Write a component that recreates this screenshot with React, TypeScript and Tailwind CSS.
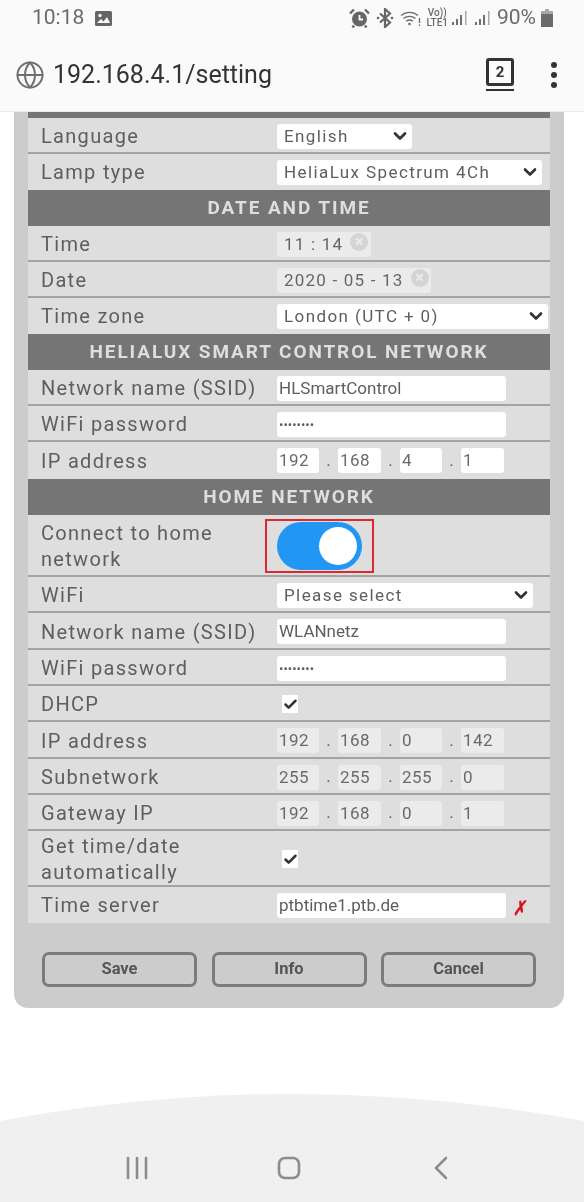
import React from 'react';
import { Check, ChevronDown, Globe } from 'lucide-react';

const Label = ({ children }: any) => (
  <div className="w-[236px] shrink-0 text-[20px] leading-[26px] tracking-[1.3px] text-[#5e5e5e]">{children}</div>
);

const Row = ({ label, children, h = 'h-[36px]' }: any) => (
  <div className={`flex items-center border-b-2 border-[#a3a3a3] pl-[13px] pt-[2px] ${h}`}>
    <Label>{label}</Label>
    <div className="flex min-w-0 flex-1 items-center">{children}</div>
  </div>
);

const LastRow = ({ label, children, h = 'h-[36px]' }: any) => (
  <div className={`flex items-center pl-[13px] ${h}`}>
    <Label>{label}</Label>
    {children}
  </div>
);

const Heading = ({ children }: any) => (
  <div className="flex h-[36px] items-center justify-center bg-[#757575] pt-[1px] text-[19px] font-bold tracking-[1.9px] text-[#dedede]">
    {children}
  </div>
);

const Select = ({ value, w }: any) => (
  <div className={`flex h-[25px] shrink-0 items-center justify-between rounded-[3px] bg-white pl-[7px] pr-[2px] text-[17px] tracking-[1.4px] text-[#5e5e5e] ${w}`}>
    <span className="pt-[1px]">{value}</span>
    <ChevronDown size={20} strokeWidth={3.2} className="text-[#333]" />
  </div>
);

const TextInput = ({ value, dots }: any) => (
  <div className={`flex h-[25px] w-[229px] shrink-0 items-center rounded-[3px] bg-white pl-[2px] pt-[1px] text-[#5e5e5e] ${dots ? 'text-[13px] tracking-[0px]' : 'text-[17px]'}`}>
    {value}
  </div>
);

const Chip = ({ value, w, white }: any) => (
  <div className={`flex h-[25px] items-center rounded-[3px] pl-[2px] pt-[1px] text-[17px] tracking-[0.5px] text-[#6a6a6a] ${white ? 'bg-white' : 'bg-[#ebebeb]'} ${w}`}>
    {value}
  </div>
);

const IpFields = ({ parts, white }: any) => (
  <div className="flex items-center text-[17px] text-[#5e5e5e]">
    <Chip value={parts[0]} w="w-[42px]" white={white} />
    <span className="w-[19px] text-center">.</span>
    <Chip value={parts[1]} w="w-[43px]" white={white} />
    <span className="w-[19px] text-center">.</span>
    <Chip value={parts[2]} w="w-[42px]" white={white} />
    <span className="w-[19px] text-center">.</span>
    <Chip value={parts[3]} w="w-[43px]" white={white} />
  </div>
);

const DateChip = ({ value, w }: any) => (
  <div className={`flex h-[25px] items-center whitespace-nowrap rounded-[3px] bg-[#ebebeb] pl-[7px] text-[17px] tracking-[1.2px] text-[#666] ${w}`}>
    <span className="pt-[1px]">{value}</span>
    <span className="mb-[5px] ml-[7px] flex h-[18px] w-[18px] items-center justify-center rounded-full bg-[#d4d4d4] text-[16px] font-bold leading-none tracking-normal text-[#ebebeb]">×</span>
  </div>
);

const Tick = () => (
  <div className="ml-[5px] flex h-[18px] w-[16px] items-center justify-center bg-white">
    <Check size={15} strokeWidth={4} className="text-[#333]" />
  </div>
);

const Btn = ({ children }: any) => (
  <div className="flex h-[35px] w-[155px] items-center justify-center rounded-[7px] border-[3px] border-[#7c7c7c] text-[16.5px] font-bold text-[#555]">
    {children}
  </div>
);

const SignalBars = () => (
  <svg width="17" height="17" viewBox="0 0 17 17" fill="#6e6e6e">
    <rect x="1" y="12" width="2" height="3" />
    <rect x="5" y="9" width="2" height="6" />
    <rect x="9" y="5" width="2" height="10" />
    <rect x="14" y="1" width="1.500" height="14" fill="#a8a8a8" />
  </svg>
);

const AlarmIcon = () => (
  <svg width="21" height="20" viewBox="0 0 21 20" className="mr-[6px]">
    <circle cx="10.500" cy="11" r="7.500" fill="#666" />
    <path d="M10.500 7v4.500h3.500" fill="none" stroke="#fafafa" strokeWidth="1.800" />
    <path d="M1 5.500L5 1.500M20 5.500L16 1.500M5 17.500L3.500 19.500M16 17.500L17.500 19.500" stroke="#666" strokeWidth="2.400" />
  </svg>
);

const BluetoothIcon = () => (
  <svg width="18" height="20" viewBox="0 0 18 20" fill="none" stroke="#666" strokeWidth="2.200" className="mr-[6px]">
    <path d="M4 5.500l10 9-5 4.500V1l5 4.500-10 9" />
    <circle cx="2" cy="10" r="1.300" fill="#666" stroke="none" />
    <circle cx="16" cy="10" r="1.300" fill="#666" stroke="none" />
  </svg>
);

const WifiIcon = () => (
  <svg width="21" height="18" viewBox="0 0 21 18" fill="none" stroke="#6b6b6b" strokeWidth="1.400" className="mr-[5px]">
    <path d="M1 6.500a13 13 0 0 1 17 0M3.500 9.500a9.500 9.500 0 0 1 12 0M6.200 12.300a5.500 5.500 0 0 1 6.600 0" />
    <circle cx="9.500" cy="15" r="1.300" fill="#6b6b6b" stroke="none" />
    <path d="M19.500 9v5M19.500 15.500v1.500" strokeWidth="1.300" />
  </svg>
);

const StatusBar = () => (
  <div className="flex h-[36px] items-center justify-between pl-[32px] pr-[31px] text-[#6b6b6b]">
    <div className="flex items-center gap-[11px]">
      <span className="text-[21px]">10:18</span>
      <svg width="17" height="15" viewBox="0 0 17 15">
        <rect x="0" y="0" width="17" height="15" rx="1.5" fill="#666" />
        <circle cx="5" cy="4.500" r="1.700" fill="#fafafa" />
        <path d="M2 12l4-4 2.500 2.500L12 6l3 6z" fill="#fafafa" />
      </svg>
    </div>
    <div className="flex items-center">
      <AlarmIcon />
      <BluetoothIcon />
      <WifiIcon />
      <div className="mr-[3px] flex flex-col items-center text-[10px] font-medium leading-[10px]">
        <span>Vo))</span>
        <span>LTE1</span>
      </div>
      <SignalBars />
      <span className="w-[6px]" />
      <SignalBars />
      <span className="ml-[6px] text-[21px]">90%</span>
      <svg width="12" height="18" viewBox="0 0 12 18" className="ml-[5px]" fill="#6b6b6b">
        <rect x="4" y="0" width="4" height="2" fill="#a8a8a8" />
        <rect x="0" y="2" width="12" height="3" fill="#a8a8a8" />
        <rect x="0" y="5" width="12" height="13" />
      </svg>
    </div>
  </div>
);

const UrlBar = () => (
  <div className="flex h-[76px] items-center justify-between border-b border-[#ececec] pt-[2px] pl-[15px] pr-[27px]">
    <div className="flex items-center gap-[8px]">
      <Globe size={30} strokeWidth={1.6} className="text-[#6f6f6f]" />
      <span className="text-[25px] text-[#333]">192.168.4.1/setting</span>
    </div>
    <div className="flex items-center gap-[37px]">
      <div className="flex flex-col items-center gap-[3px]">
        <div className="flex h-[28px] w-[28px] items-center justify-center rounded-[3px] border-[3px] border-[#333] text-[15px] font-bold text-[#333]">2</div>
        <div className="h-[2px] w-[28px] bg-[#333]" />
      </div>
      <div className="flex flex-col gap-[4px]">
        <span className="h-[6px] w-[6px] rounded-full bg-[#333]" />
        <span className="h-[6px] w-[6px] rounded-full bg-[#333]" />
        <span className="h-[6px] w-[6px] rounded-full bg-[#333]" />
      </div>
    </div>
  </div>
);

const NavBar = () => (
  <div className="mt-auto h-[108px]">
    <svg width="584" height="28" viewBox="0 0 584 28" className="block" preserveAspectRatio="none">
      <path d="M0 27 Q292 -27 584 27 V28 H0z" fill="#f0f0f0" />
    </svg>
    <div className="flex h-[80px] items-start bg-[#f0f0f0] pl-[126px] pt-[34px]">
      <svg width="22" height="24" viewBox="0 0 22 24" stroke="#8c8c8c" strokeWidth="2.600" strokeLinecap="round">
        <path d="M2 2v20M11 2v20M20 2v20" />
      </svg>
      <svg width="24" height="24" viewBox="0 0 24 24" fill="none" stroke="#8c8c8c" strokeWidth="2.600" className="ml-[129px]">
        <rect x="2" y="2" width="20" height="20" rx="6" />
      </svg>
      <svg width="14" height="24" viewBox="0 0 14 24" fill="none" stroke="#8c8c8c" strokeWidth="2.600" strokeLinecap="round" strokeLinejoin="round" className="ml-[133px]">
        <path d="M12 2L2 12l10 10" />
      </svg>
    </div>
  </div>
);

export default function App() {
  return (
    <div className="flex h-[1202px] w-[584px] flex-col overflow-hidden bg-white font-['Roboto',sans-serif] blur-[0.4px]">
      <div className="bg-[#fafafa]">
        <StatusBar />
        <UrlBar />
      </div>

      <div className="ml-[14px] w-[550px] rounded-b-[14px] bg-[#cccccc] px-[14px] pb-[21px]">
        <div className="border-t-[6px] border-[#757575] bg-[#dedede]">
          <Row label="Language"><Select value="English" w="w-[135px]" /></Row>
          <LastRow label="Lamp type"><Select value="HeliaLux Spectrum 4Ch" w="w-[265px]" /></LastRow>
          <Heading>DATE AND TIME</Heading>
          <Row label="Time"><DateChip value="11 : 14" w="w-[94px]" /></Row>
          <Row label="Date"><DateChip value="2020 - 05 - 13" w="w-[154px]" /></Row>
          <LastRow label="Time zone"><Select value="London (UTC + 0)" w="w-[271px]" /></LastRow>
          <Heading>HELIALUX SMART CONTROL NETWORK</Heading>
          <Row label="Network name (SSID)"><TextInput value="HLSmartControl" /></Row>
          <Row label="WiFi password"><TextInput value="••••••••" dots /></Row>
          <LastRow label="IP address" h="h-[37px]"><IpFields parts={['192', '168', '4', '1']} white /></LastRow>
          <Heading>HOME NETWORK</Heading>
          <Row label={<>Connect to home<br />network</>} h="h-[62px]">
            <div className="relative">
              <div className="flex h-[48px] w-[85px] items-center justify-end rounded-full bg-[#2196f3] pr-[5px]">
                <div className="h-[38px] w-[38px] rounded-full bg-white" />
              </div>
              <div className="absolute -left-[12px] -top-[3px] h-[54px] w-[109px] border-2 border-[#e0262e]" />
            </div>
          </Row>
          <Row label="WiFi"><Select value="Please select" w="w-[256px]" /></Row>
          <Row label="Network name (SSID)" h="h-[37px]"><TextInput value="WLANnetz" /></Row>
          <Row label="WiFi password"><TextInput value="••••••••" dots /></Row>
          <Row label="DHCP"><Tick /></Row>
          <Row label="IP address" h="h-[37px]"><IpFields parts={['192', '168', '0', '142']} /></Row>
          <Row label="Subnetwork"><IpFields parts={['255', '255', '255', '0']} /></Row>
          <Row label="Gateway IP"><IpFields parts={['192', '168', '0', '1']} /></Row>
          <Row label={<>Get time/date<br />automatically</>} h="h-[56px]"><Tick /></Row>
          <LastRow label="Time server">
            <TextInput value="ptbtime1.ptb.de" />
            <span className="ml-[5px] mt-[5px] scale-x-75 text-[20px] font-bold italic leading-none text-[#d8121c]">✗</span>
          </LastRow>
        </div>
        <div className="mt-[29px] flex justify-between px-[14px]">
          <Btn>Save</Btn>
          <Btn>Info</Btn>
          <Btn>Cancel</Btn>
        </div>
      </div>

      <NavBar />
    </div>
  );
}
